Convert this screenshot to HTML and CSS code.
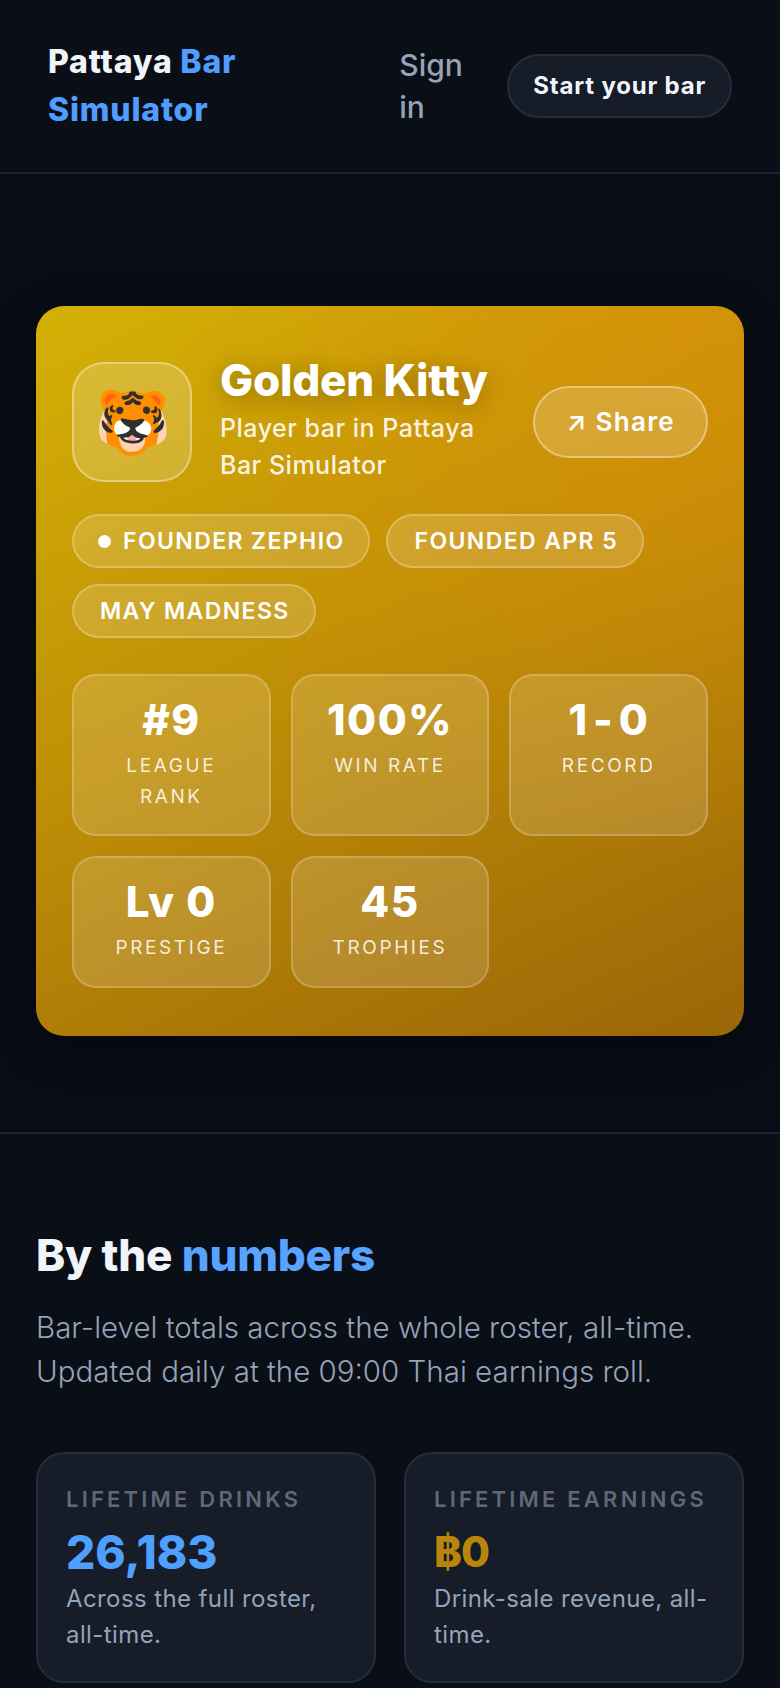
FILE: index.html
```html
<!DOCTYPE html>
<html lang="en">
<head>
    <meta charset="UTF-8">
    <meta name="viewport" content="width=device-width, initial-scale=1.0">
    <title>Golden Kitty - Pattaya Bar Simulator</title>
    <link rel="stylesheet" href="styles.css">
</head>
<body>
    <header class="topbar">
        <a class="logo" href="#">Pattaya <span class="accent">Bar Simulator</span></a>
        <nav class="topbar-nav">
            <a class="signin" href="#">Sign in</a>
            <a class="start-btn" href="#">Start your bar</a>
        </nav>
    </header>

    <section class="hero">
        <div class="bar-card">
            <div class="bar-head">
                <div class="avatar">🐯</div>
                <div class="bar-title">
                    <h1>Golden Kitty</h1>
                    <p>Player bar in Pattaya Bar Simulator</p>
                </div>
                <a class="share-btn" href="#">↗ Share</a>
            </div>
            <div class="tags">
                <span class="tag"><span class="dot"></span>FOUNDER ZEPHIO</span>
                <span class="tag">FOUNDED APR 5</span>
                <span class="tag">MAY MADNESS</span>
            </div>
            <div class="stats">
                <div class="stat"><div class="stat-value">#9</div><div class="stat-label">LEAGUE RANK</div></div>
                <div class="stat"><div class="stat-value">100%</div><div class="stat-label">WIN RATE</div></div>
                <div class="stat"><div class="stat-value stat-record">1-0</div><div class="stat-label">RECORD</div></div>
                <div class="stat"><div class="stat-value">Lv 0</div><div class="stat-label">PRESTIGE</div></div>
                <div class="stat"><div class="stat-value">45</div><div class="stat-label">TROPHIES</div></div>
            </div>
        </div>
    </section>

    <section class="numbers">
        <h2>By the <span class="numbers-accent">numbers</span></h2>
        <p class="numbers-sub">Bar-level totals across the whole roster, all-time. Updated daily at the 09:00 Thai earnings roll.</p>
        <div class="totals">
            <div class="total-card">
                <div class="total-label">LIFETIME DRINKS</div>
                <div class="total-value blue">26,183</div>
                <div class="total-desc">Across the full roster, all-time.</div>
            </div>
            <div class="total-card">
                <div class="total-label">LIFETIME EARNINGS</div>
                <div class="total-value gold">฿0</div>
                <div class="total-desc">Drink-sale revenue, all-time.</div>
            </div>
        </div>
    </section>
</body>
</html>
```

FILE: styles.css
```css
* {
    box-sizing: border-box;
}

body {
    margin: 0;
    background-color: #0a0e17;
    color: #f1f5f9;
    font-family: Inter, "Noto Sans", sans-serif;
    line-height: 1.6;
}

a {
    color: inherit;
    text-decoration: none;
}

.accent {
    color: #4f9dff;
}

.topbar {
    display: flex;
    align-items: center;
    justify-content: space-between;
    height: 174px;
    padding: 0 48px;
    border-bottom: 2px solid #1c2230;
}

.logo {
    width: 230px;
    font-size: 32px;
    font-weight: 800;
    line-height: 48px;
    letter-spacing: 0.8px;
}

.topbar-nav {
    display: flex;
    align-items: center;
    gap: 44px;
}

.signin {
    width: 64px;
    font-size: 30px;
    font-weight: 500;
    line-height: 42px;
    color: #94a3b8;
}

.start-btn {
    padding: 12px 24px;
    background-color: #161c28;
    border: 2px solid #252c3b;
    border-radius: 32px;
    font-size: 24px;
    font-weight: 700;
    line-height: 36px;
    letter-spacing: 0.8px;
}

.hero {
    padding: 132px 36px 96px;
    background-color: #080c14;
    border-bottom: 2px solid #1c2230;
}

.bar-card {
    padding: 48px 36px;
    background: radial-gradient(circle at 92% 4%, rgba(222, 140, 10, 0.55), rgba(222, 140, 10, 0) 55%), linear-gradient(155deg, #d4b106 0%, #c09006 45%, #9a6508 100%);
    border-radius: 28px;
    box-shadow: 0 12px 40px rgba(0, 0, 0, 0.3);
}

.bar-head {
    display: flex;
    align-items: center;
    gap: 28px;
    min-height: 136px;
}

.avatar {
    display: flex;
    flex-shrink: 0;
    align-items: center;
    justify-content: center;
    width: 120px;
    height: 120px;
    background-color: rgba(255, 255, 255, 0.18);
    border: 2px solid rgba(255, 255, 255, 0.35);
    border-radius: 32px;
    font-size: 62px;
    line-height: 1;
}

.bar-title {
    flex: 1;
    align-self: flex-start;
}

.bar-title h1 {
    margin: 0 0 3px;
    font-size: 44px;
    font-weight: 800;
    line-height: 1.2;
    letter-spacing: -0.2px;
    color: #fff;
    text-shadow: 0 4px 24px rgba(0, 0, 0, 0.3);
}

.bar-title p {
    margin: 0;
    font-size: 25px;
    font-weight: 500;
    line-height: 37.5px;
    letter-spacing: 0.5px;
    color: rgba(255, 255, 255, 0.9);
}

.share-btn {
    flex-shrink: 0;
    padding: 13px 31px 14px;
    background-color: rgba(255, 255, 255, 0.18);
    border: 2px solid rgba(255, 255, 255, 0.35);
    border-radius: 37px;
    font-size: 26px;
    font-weight: 600;
    letter-spacing: 1.3px;
    color: #fff;
}

.tags {
    display: flex;
    flex-wrap: wrap;
    gap: 16px;
    margin-top: 24px;
}

.tag {
    display: flex;
    align-items: center;
    gap: 12px;
    height: 54px;
    padding: 0 24px 0 26px;
    background-color: rgba(255, 255, 255, 0.15);
    border: 2px solid rgba(255, 255, 255, 0.25);
    border-radius: 27px;
    font-size: 23px;
    font-weight: 600;
    letter-spacing: 1.4px;
    color: #fff;
}

.dot {
    width: 13px;
    height: 13px;
    margin-left: -2px;
    background-color: #fff;
    border-radius: 50%;
}

.stats {
    display: grid;
    grid-template-columns: repeat(3, 1fr);
    gap: 20px;
    margin-top: 36px;
}

.stat {
    padding: 20px 24px 22px;
    background-color: rgba(255, 255, 255, 0.14);
    border: 2px solid rgba(255, 255, 255, 0.2);
    border-radius: 24px;
    text-align: center;
    color: #fff;
}

.stat-value {
    font-size: 42px;
    font-weight: 800;
    letter-spacing: 1.5px;
    line-height: 1.15;
}

.stat-record {
    letter-spacing: 6px;
    text-indent: 5px;
}

.stat-label {
    margin-top: 7px;
    font-size: 19px;
    letter-spacing: 2.6px;
    color: rgba(255, 255, 255, 0.85);
}

.numbers {
    padding: 95px 36px 4px;
}

.numbers h2 {
    margin: 0;
    font-size: 44px;
    font-weight: 800;
    line-height: 1.2;
    letter-spacing: -0.2px;
}

.numbers-accent {
    color: #58a3ff;
}

.numbers-sub {
    margin: 23px 0 0;
    font-size: 29.5px;
    font-weight: 300;
    line-height: 44px;
    color: #94a3b8;
}

.totals {
    display: grid;
    grid-template-columns: 1fr 1fr;
    gap: 28px;
    margin-top: 59px;
}

.total-card {
    padding: 28px;
    background-color: #161c28;
    border: 2px solid #252c3b;
    border-radius: 28px;
}

.total-label {
    font-size: 22px;
    font-weight: 600;
    letter-spacing: 3.2px;
    color: #5f6878;
}

.total-value {
    height: 58px;
    margin-top: 6px;
    font-size: 46px;
    font-weight: 800;
    line-height: 58px;
}

.blue {
    color: #4f9fff;
}

.gold {
    font-size: 42px;
    letter-spacing: -1px;
    color: #b8860b;
}

.total-desc {
    font-size: 24px;
    line-height: 36px;
    letter-spacing: 0.4px;
    color: #94a3b8;
}
```
